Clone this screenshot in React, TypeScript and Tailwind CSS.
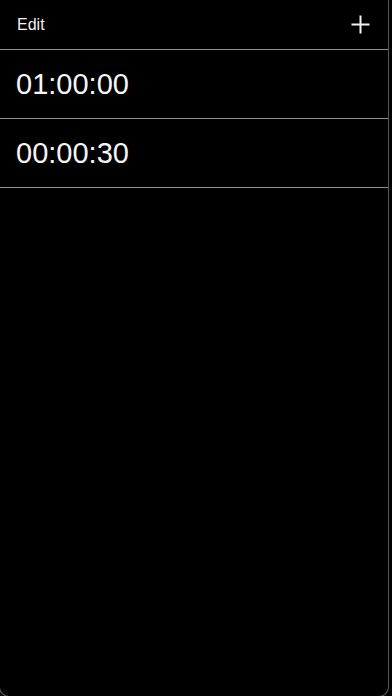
const TIMERS = ["01:00:00", "00:00:30"];

export default function App() {
  return (
    <div className="h-[696px] w-[392px] overflow-hidden bg-black font-['Liberation_Sans',Arial,sans-serif] text-white">
      <div className="-ml-px flex h-[697px] w-[390px] flex-col rounded-b-[10px] border border-t-0 border-[#5a5a5a] bg-black">
        <header className="flex h-[49px] flex-none items-center justify-between pl-[17px] pr-[18px]">
          <span className="text-[16px] leading-none text-[#f2f2f2]">Edit</span>
          <svg width="19" height="19" viewBox="0 0 19 19" className="text-[#f2f2f2]">
            <path d="M9.5 0.5v18M0.5 9.5h18" stroke="currentColor" strokeWidth="2" />
          </svg>
        </header>
        <ul className="border-t border-[#8f8f8f]">
          {TIMERS.map((t) => (
            <li
              key={t}
              className="flex h-[69px] items-center border-b border-[#8f8f8f] pl-[16px] text-[29px] leading-none text-[#f5f5f5]"
            >
              {t}
            </li>
          ))}
        </ul>
      </div>
    </div>
  );
}
